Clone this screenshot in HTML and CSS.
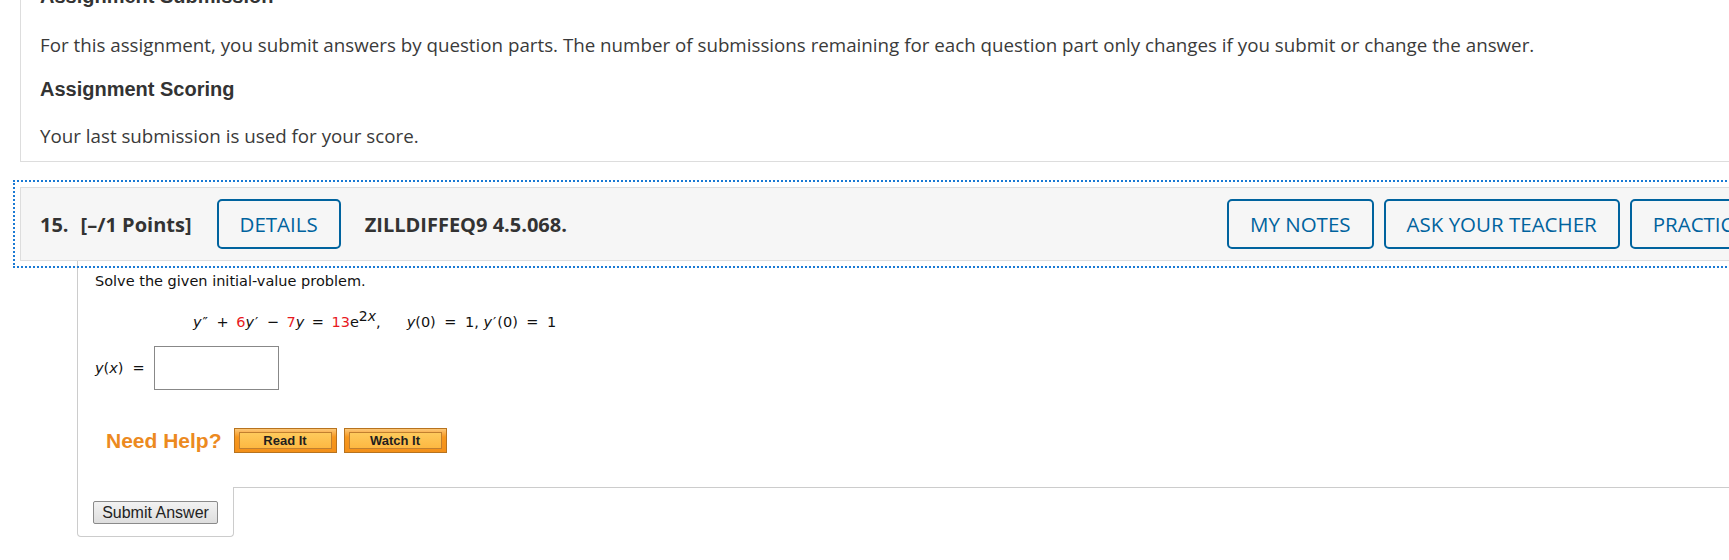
FILE: index.html
```html
<!DOCTYPE html>
<html lang="en">
<head>
<meta charset="utf-8">
<title>Assignment</title>
<link rel="stylesheet" href="styles.css">
</head>
<body>
<div class="page">
  <section class="info-card">
    <h3 class="info-title">Assignment Submission</h3>
    <p class="info-text">For this assignment, you submit answers by question parts. The number of submissions remaining for each question part only changes if you submit or change the answer.</p>
    <h3 class="info-title info-sub">Assignment Scoring</h3>
    <p class="info-text info-last">Your last submission is used for your score.</p>
  </section>

  <section class="question">
    <header class="q-header">
      <span class="q-num">15.</span>
      <span class="q-points">[–/1 Points]</span>
      <button class="q-btn">DETAILS</button>
      <span class="q-code">ZILLDIFFEQ9 4.5.068.</span>
      <div class="q-actions">
        <button class="q-btn">MY NOTES</button>
        <button class="q-btn">ASK YOUR TEACHER</button>
        <button class="q-btn">PRACTICE ANOTHER</button>
      </div>
    </header>

    <div class="q-body">
      <div class="q-content">
        <p class="prompt">Solve the given initial-value problem.</p>
        <p class="equation"><i>y</i><span class="pr">″</span><span class="op">+</span><span class="red">6</span><i>y</i><span class="pr">′</span><span class="op">−</span><span class="red">7</span><i>y</i><span class="op">=</span><span class="red">13</span>e<sup>2<i>x</i></sup>,<span class="eq-gap"></span><i>y</i>(0)<span class="op op-wide">=</span>1, <i>y</i><span class="pr">′</span>(0)<span class="op op-wide">=</span>1</p>
        <div class="answer-row">
          <span class="answer-label"><i>y</i>(<i>x</i>)<span class="eq">=</span></span>
          <span class="answer-input"></span>
        </div>
        <div class="help-row">
          <span class="need-help">Need Help?</span>
          <span class="img-btn"><span>Read It</span></span>
          <span class="img-btn"><span>Watch It</span></span>
        </div>
      </div>
      <div class="q-foot">
        <div class="submit-cell"><button class="submit-btn">Submit Answer</button></div>
        <div class="foot-fill"></div>
      </div>
    </div>
  </section>
</div>
</body>
</html>
```
FILE: styles.css
```css
* { box-sizing: border-box; }
html, body { margin: 0; padding: 0; overflow: hidden; background: #fff; }
body { width: 1729px; height: 560px; color: #333; font-family: "Open Sans", "Liberation Sans", sans-serif; }

.page { padding-left: 20px; }

.info-card {
  width: 1868px;
  margin-top: -30px;
  border: 1px solid #ddd;
  border-top: none;
  padding: 13px 0 12px 19px;
}
.info-title {
  margin: 0;
  font: bold 20px/26px "Liberation Sans", Arial, sans-serif;
  color: #333;
}
.info-sub { margin-top: 18px; }
.info-text {
  margin: 23px 0 0;
  font-size: 18.75px;
  line-height: 26px;
  color: #3a3a3a;
}
.info-last { margin-top: 21px; }

.question { margin-top: 25px; }
.q-header {
  width: 1868px;
  height: 74px;
  display: flex;
  align-items: center;
  padding: 0 19px;
  background: #f6f6f6;
  border: 1px solid #ddd;
  outline: 2px dotted #1a7ad4;
  outline-offset: 5px;
  font-size: 20px;
  font-weight: 700;
  color: #333;
}
.q-num { margin-right: 12px; }
.q-points { margin-right: 25px; }
.q-code { margin-left: 24px; }
.q-btn {
  height: 50px;
  padding: 0 21px;
  border: 2px solid #00639e;
  border-radius: 5px;
  background: transparent;
  color: #00639e;
  font: 400 20.5px/1 "Open Sans", sans-serif;
  white-space: nowrap;
}
.q-actions { margin-left: auto; display: flex; gap: 10px; }

.q-body { margin-left: 57px; }
.q-content {
  border-left: 1px solid #ccc;
  padding: 10px 0 34px 17px;
  font-family: "DejaVu Sans", Verdana, sans-serif;
  font-size: 14.5px;
  color: #111;
}
.prompt { margin: 0; line-height: 20px; }
.equation { margin: 21px 0 0 98px; line-height: 20px; white-space: nowrap; }
.equation sup { font-size: 14px; line-height: 0; vertical-align: 6px; }
.pr { margin-left: 1px; margin-right: 1px; }
.op { margin: 0 7.5px; }
.op-wide { margin: 0 8.5px; }
.red { color: #e8191e; }
.eq-gap { display: inline-block; width: 26px; }
.answer-row { margin-top: 14px; display: flex; align-items: center; }
.answer-label { line-height: 20px; }
.eq { margin-left: 9px; }
.answer-input {
  width: 125px;
  height: 44px;
  margin-left: 9px;
  border: 1px solid #888;
  background: #fff;
}
.help-row { margin: 38px 0 0 11px; display: flex; align-items: center; gap: 7px; height: 25px; }
.need-help {
  margin-right: 5px;
  font: bold 21px/25px "Liberation Sans", Arial, sans-serif;
  color: #ec8a1f;
}
.img-btn {
  width: 103px;
  height: 25px;
  padding: 3px 4px;
  border: 1px solid #b7731f;
  background: linear-gradient(#fcc777, #f7981f 35%, #f39019);
}
.img-btn span {
  display: block;
  height: 100%;
  border: 1px solid #c17f2f;
  background: linear-gradient(#feca5c, #fdb842);
  font: bold 13px/16px "Liberation Sans", Arial, sans-serif;
  color: #1e1e1e;
  text-align: center;
}

.q-foot { display: flex; }
.submit-cell {
  padding: 14px 15px 12px;
  border: 1px solid #ccc;
  border-top: none;
  border-radius: 0 0 4px 4px;
}
.submit-btn {
  display: block;
  width: 125px;
  height: 23px;
  padding: 0;
  border: 1px solid #8a8a8a;
  border-radius: 2px;
  background: linear-gradient(#f2f2f2, #dedede);
  font: 16px/1 "Liberation Sans", Arial, sans-serif;
  color: #222;
}
.foot-fill { flex: 1; border-top: 1px solid #ccc; }
```
